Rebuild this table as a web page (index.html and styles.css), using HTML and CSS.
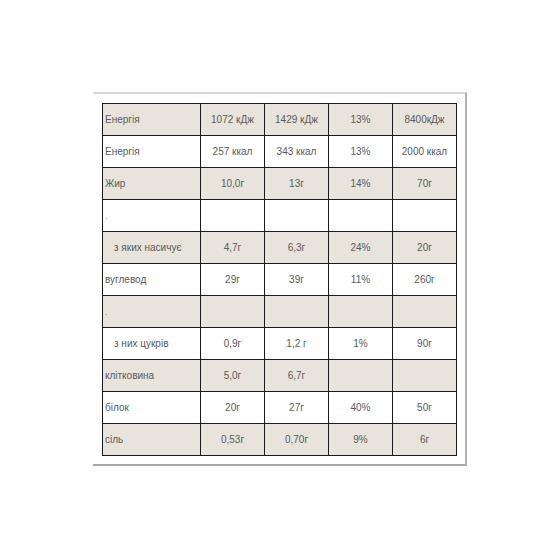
FILE: index.html
```html
<!DOCTYPE html>
<html lang="uk">
<head>
<meta charset="utf-8">
<link rel="stylesheet" href="styles.css">
</head>
<body>
<div class="page">
  <div class="frame">
    <table class="nutri">
      <colgroup>
        <col class="c-name"><col class="c-val"><col class="c-val"><col class="c-val"><col class="c-val">
      </colgroup>
      <tbody>
        <tr class="shade"><td class="name">Енергія</td><td>1072 кДж</td><td>1429 кДж</td><td>13%</td><td>8400кДж</td></tr>
        <tr><td class="name">Енергія</td><td>257 ккал</td><td>343 ккал</td><td>13%</td><td>2000 ккал</td></tr>
        <tr class="shade"><td class="name">Жир</td><td>10,0г</td><td>13г</td><td>14%</td><td>70г</td></tr>
        <tr><td class="name dot">.</td><td></td><td></td><td></td><td></td></tr>
        <tr class="shade"><td class="name sub">з яких насичує</td><td>4,7г</td><td>6,3г</td><td>24%</td><td>20г</td></tr>
        <tr><td class="name">вуглевод</td><td>29г</td><td>39г</td><td>11%</td><td>260г</td></tr>
        <tr class="shade"><td class="name dot">.</td><td></td><td></td><td></td><td></td></tr>
        <tr><td class="name sub">з них цукрів</td><td>0,9г</td><td>1,2 г</td><td>1%</td><td>90г</td></tr>
        <tr class="shade"><td class="name">клітковина</td><td>5,0г</td><td>6,7г</td><td></td><td></td></tr>
        <tr><td class="name">білок</td><td>20г</td><td>27г</td><td>40%</td><td>50г</td></tr>
        <tr class="shade"><td class="name">сіль</td><td>0,53г</td><td>0,70г</td><td>9%</td><td>6г</td></tr>
      </tbody>
    </table>
  </div>
</div>
</body>
</html>
```
FILE: styles.css
```css
html, body {
  margin: 0;
  padding: 0;
  background: #ffffff;
}

.page {
  padding: 92px 0 0 93px;
}

.frame {
  box-sizing: content-box;
  padding: 9px 8px 8px 9px;
  width: 355px;
  border-top: 2px solid #d6d6d6;
  border-right: 2px solid #b0b0b0;
  border-bottom: 2px solid #a8a8a8;
}

.nutri {
  border-collapse: collapse;
  table-layout: fixed;
  width: 355px;
  font-family: "Liberation Sans", Arial, sans-serif;
  font-size: 10px;
  color: #5a5a5a;
}

.c-name { width: 98px; }
.c-val { width: 64px; }

.nutri td {
  border: 1px solid #1a1a1a;
  height: 31px;
  padding: 0 2px;
  text-align: center;
  vertical-align: middle;
  white-space: nowrap;
  overflow: hidden;
}

.nutri tr.shade td {
  background: #e8e4dc;
}

.nutri td.name {
  text-align: left;
}

.nutri td.sub {
  padding-left: 11px;
}

.nutri td.dot {
  font-size: 9px;
  color: #888888;
}
```
